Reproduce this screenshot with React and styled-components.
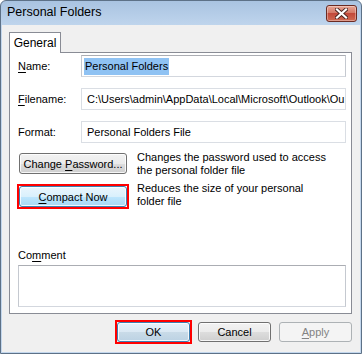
import React from "react";
import styled, { createGlobalStyle, css } from "styled-components";

const Global = createGlobalStyle`
  html, body { margin: 0; padding: 0; background: #ffffff; }
  body { font-family: "Liberation Sans", Arial, sans-serif; font-size: 11px; color: #000; }
  * { box-sizing: border-box; }
`;

const Window = styled.div`
  width: 362px;
  height: 354px;
  display: flex;
  flex-direction: column;
  border: 1px solid #5d7187;
  border-radius: 6px 6px 0 0;
  background: linear-gradient(#a9c3e1, #c4d9ef 30px);
  overflow: hidden;
`;

const TitleBar = styled.div`
  height: 24px;
  flex: none;
  display: flex;
  align-items: center;
  justify-content: space-between;
  padding: 0 4px 2px 6px;
`;

const Title = styled.div`
  font-size: 12.5px;
  color: #000;
`;

const CloseBox = styled.div`
  width: 31px;
  height: 17px;
  margin-top: 2px;
  border: 1px solid #6b2b22;
  border-radius: 3px;
  background: linear-gradient(#e8a493 0%, #d47a68 45%, #c3493a 50%, #cf6a52 100%);
  box-shadow: inset 0 0 0 1px rgba(255, 255, 255, 0.35);
  display: flex;
  align-items: center;
  justify-content: center;
`;

const Client = styled.div`
  flex: 1;
  display: flex;
  flex-direction: column;
  background: #f0f0f0;
  border: 1px solid #c3d7ed;
  border-top: none;
  padding: 7px 8px 10px 7px;
`;

const TabStrip = styled.div`
  display: flex;
  position: relative;
  z-index: 1;
  margin-bottom: -1px;
`;

const Tab = styled.div`
  width: 52px;
  height: 21px;
  border: 1px solid #898c95;
  border-bottom: none;
  background: #ffffff;
  display: flex;
  align-items: center;
  justify-content: center;
  padding-bottom: 1px;
  font-size: 12px;
`;

const Panel = styled.div`
  height: 262px;
  flex: none;
  border: 1px solid #898c95;
  background: #ffffff;
  display: flex;
  flex-direction: column;
  padding: 2px 5px 6px 8px;
`;

const FieldGrid = styled.div`
  display: grid;
  grid-template-columns: 63px 1fr;
  row-gap: 11px;
  align-items: center;
`;

const Label = styled.div`
  white-space: nowrap;
`;

const Key = styled.span`
  text-decoration: underline;
  text-underline-offset: 2px;
`;

const Field = styled.div`
  height: 22px;
  border: 1px solid ${(p) => (p.$readOnly ? "#dadee4" : "#abadb3")};
  ${(p) =>
    !p.$readOnly &&
    css`
      border-left-color: #c5c9d0;
      border-right-color: #c5c9d0;
      border-bottom-color: #d3d7de;
    `}
  background: #ffffff;
  display: flex;
  align-items: center;
  padding: 0 4px 0 ${(p) => (p.$readOnly ? "5px" : "2px")};
  white-space: nowrap;
  overflow: hidden;
`;

const Selected = styled.span`
  background: #8fc2f3;
  padding: 1px 1px;
  line-height: 15px;
`;

const ActionGrid = styled.div`
  display: grid;
  grid-template-columns: 108px 1fr;
  column-gap: 10px;
  row-gap: 9px;
  margin-top: 10px;
  margin-left: 1px;
`;

const Desc = styled.div`
  line-height: 13px;
  margin-top: ${(p) => p.$shift || 0}px;
  color: #000;
`;

const Button = styled.button`
  position: relative;
  font: inherit;
  color: #000;
  height: ${(p) => p.$h || 21}px;
  width: ${(p) => p.$w || 73}px;
  padding: 0;
  border: 1px solid #707070;
  border-radius: 3px;
  background: linear-gradient(#f2f2f2 0%, #ebebeb 50%, #dddddd 51%, #cfcfcf 100%);
  box-shadow: inset 0 0 0 1px rgba(255, 255, 255, 0.8);
  white-space: nowrap;
  ${(p) =>
    p.$hot &&
    css`
      border-color: #3c7fb1;
      background: linear-gradient(#eaf6fd 0%, #d9f0fc 50%, #bee6fd 51%, #a7d9f5 100%);
    `}
  ${(p) =>
    p.$default &&
    css`
      border-color: #3c7fb1;
      background: linear-gradient(#e5f1fa 0%, #dae8f3 50%, #c9dbe8 51%, #bcd2e3 100%);
    `}
  ${(p) =>
    p.$disabled &&
    css`
      border-color: #adb2b5;
      background: #f4f4f4;
      color: #838383;
      box-shadow: none;
    `}
  ${(p) =>
    p.$marked &&
    css`
      &::after {
        content: "";
        position: absolute;
        inset: -3px;
        border: 2px solid #ff0000;
        pointer-events: none;
      }
    `}
`;

const CommentBlock = styled.div`
  margin-top: auto;
  display: flex;
  flex-direction: column;
  gap: 4px;
`;

const CommentBox = styled.div`
  height: 42px;
  border: 1px solid #abadb3;
  border-left-color: #c5c9d0;
  border-right-color: #c5c9d0;
  border-bottom-color: #d3d7de;
  background: #ffffff;
`;

const ButtonRow = styled.div`
  display: flex;
  justify-content: flex-end;
  gap: 8px;
  margin-top: 8px;
`;

function CloseGlyph() {
  return (
    <svg width="13" height="11" viewBox="0 0 13 11">
      <path d="M2 1.5 L11 9.5 M11 1.5 L2 9.5" stroke="#4a2520" strokeWidth="4" strokeLinecap="square" />
      <path d="M2 1.5 L11 9.5 M11 1.5 L2 9.5" stroke="#ffffff" strokeWidth="2.2" strokeLinecap="square" />
    </svg>
  );
}

export default function App() {
  return (
    <>
      <Global />
      <Window>
        <TitleBar>
          <Title>Personal Folders</Title>
          <CloseBox>
            <CloseGlyph />
          </CloseBox>
        </TitleBar>
        <Client>
          <TabStrip>
            <Tab>General</Tab>
          </TabStrip>
          <Panel>
            <FieldGrid>
              <Label>
                <Key>N</Key>ame:
              </Label>
              <Field>
                <Selected>Personal Folders</Selected>
              </Field>
              <Label>
                <Key>F</Key>ilename:
              </Label>
              <Field $readOnly>C:\Users\admin\AppData\Local\Microsoft\Outlook\Ou</Field>
              <Label>Format:</Label>
              <Field $readOnly>Personal Folders File</Field>
            </FieldGrid>
            <ActionGrid>
              <Button $w={108}>
                Change <Key>P</Key>assword...
              </Button>
              <Desc $shift={-2}>
                Changes the password used to access
                <br />
                the personal folder file
              </Desc>
              <Button $w={108} $hot $marked>
                <Key>C</Key>ompact Now
              </Button>
              <Desc $shift={-4}>
                Reduces the size of your personal
                <br />
                folder file
              </Desc>
            </ActionGrid>
            <CommentBlock>
              <Label>
                Co<Key>m</Key>ment
              </Label>
              <CommentBox />
            </CommentBlock>
          </Panel>
          <ButtonRow>
            <Button $h={20} $default $marked>
              OK
            </Button>
            <Button $h={20}>Cancel</Button>
            <Button $h={20} $disabled>
              <Key>A</Key>pply
            </Button>
          </ButtonRow>
        </Client>
      </Window>
    </>
  );
}
